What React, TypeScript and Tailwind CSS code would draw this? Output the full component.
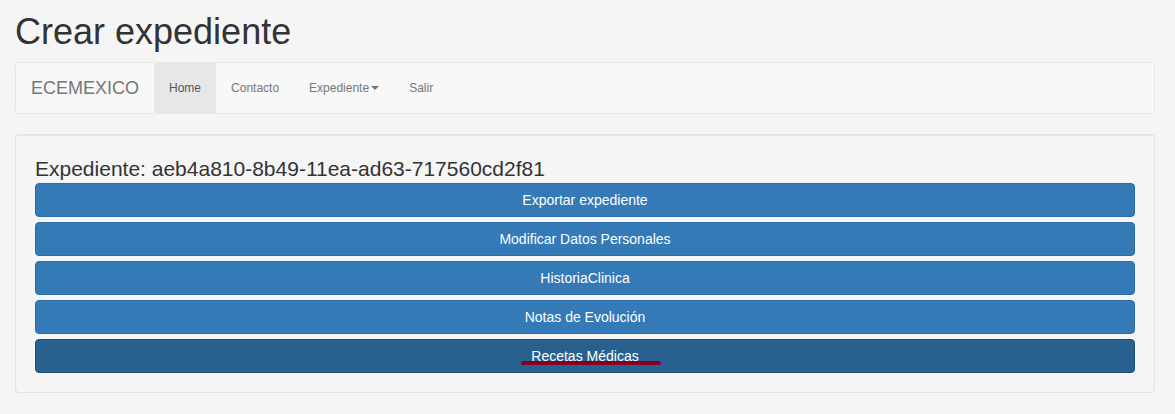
import React from 'react';

const botones = [
  'Exportar expediente',
  'Modificar Datos Personales',
  'HistoriaClinica',
  'Notas de Evolución',
];

const App = () => {
  return (
    <div className="min-h-[414px] bg-[#f5f5f5] pl-[15px] pr-[20px] font-['Liberation_Sans',Arial,sans-serif] text-[#333]">
      {/* Titulo */}
      <h1 className="pt-[12px] pb-[10px] text-[36px] leading-[40px]">Crear expediente</h1>

      {/* Navbar */}
      <nav className="flex h-[52px] items-stretch rounded-[4px] border border-[#e7e7e7] bg-[#f8f8f8]">
        <a className="flex items-center px-[15px] text-[18px] text-[#777]">ECEMEXICO</a>
        <a className="flex items-center bg-[#e7e7e7] px-[15px] text-[12px] text-[#555]">Home</a>
        <a className="flex items-center px-[15px] text-[12px] text-[#777]">Contacto</a>
        <a className="flex items-center px-[15px] text-[12px] text-[#777]">
          Expediente
          <span className="ml-[2px] inline-block h-0 w-0 border-x-[4px] border-t-[4px] border-x-transparent border-t-[#777]" />
        </a>
        <a className="flex items-center px-[15px] text-[12px] text-[#777]">Salir</a>
      </nav>

      {/* Well */}
      <div className="mt-[20px] rounded-[4px] border border-[#e3e3e3] bg-[#f5f5f5] px-[19px] pt-[19px] pb-[19px] shadow-[inset_0_1px_1px_rgba(0,0,0,0.05)]">
        <h4 className="pt-[1px] text-[21px] leading-[28px]">Expediente: aeb4a810-8b49-11ea-ad63-717560cd2f81</h4>
        <div className="flex flex-col gap-[5px]">
          {botones.map((b) => (
            <button
              key={b}
              className="h-[34px] w-full rounded-[4px] border border-[#2e6da4] bg-[#337ab7] text-[14px] text-white"
            >
              {b}
            </button>
          ))}
          <button className="relative h-[34px] w-full rounded-[4px] border border-[#204d74] bg-[#286090] text-[14px] text-white">
            Recetas Médicas
            <span className="absolute top-[21px] left-[485px] h-[4px] w-[140px] rounded-full bg-[#850020]" />
          </button>
        </div>
      </div>
    </div>
  );
};

export default App;
